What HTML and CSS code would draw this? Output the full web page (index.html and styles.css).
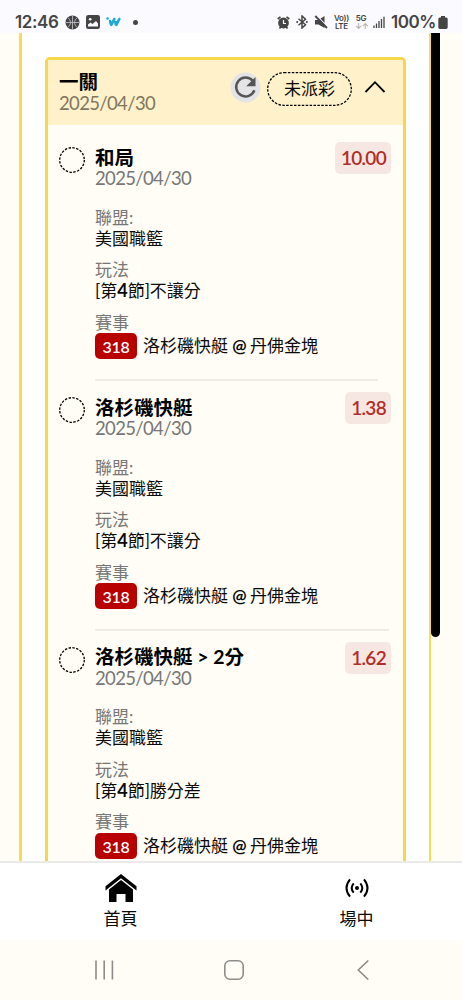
FILE: index.html
```html
<!DOCTYPE html>
<html lang="zh-Hant">
<head>
<meta charset="utf-8">
<meta name="viewport" content="width=device-width, initial-scale=1">
<title>一關</title>
<link rel="stylesheet" href="styles.css">
</head>
<body>
<header class="status">
  <span class="clock">12:46</span>
  <svg class="s-ball" width="15" height="15" viewBox="0 0 15 15"><circle cx="7.5" cy="7.5" r="7" fill="#454545"/><path d="M7.500 .5v14M.5 7.500h14M2.500 2.500c4 3 4 7 0 10M12.500 2.500c-4 3-4 7 0 10" fill="none" stroke="#c8c8ce" stroke-width=".8"/></svg>
  <svg class="s-image" width="14" height="14" viewBox="0 0 14 14"><rect x=".8" y=".8" width="12.400" height="12.400" rx="1.500" fill="#454545" stroke="#454545" stroke-width="1.600"/><path d="M2 11.500V9.500l2.500-2L6.500 9 10 6l2 2.500v3z" fill="#fafaff"/><circle cx="4.200" cy="4.200" r="1.300" fill="#fafaff"/></svg>
  <svg class="s-w" width="15" height="10" viewBox="0 0 15 10"><path d="M1.500 1.500h.1M4 4l.8 3M8.300 2L5.300 7.800M9.500 5L9.700 7M13.300 2L10.300 7.800" fill="none" stroke="#1da9d6" stroke-width="2.600" stroke-linecap="round"/></svg>
  <i class="dot"></i>
  <span class="status-right">
    <svg width="13" height="13" viewBox="0 0 13 13"><circle cx="6.500" cy="7" r="5.400" fill="#454545"/><path d="M.7 3L3.500.8M12.300 3L9.500.8M2.500 12.500l1.500-2M10.500 12.500L9 10.500" stroke="#454545" stroke-width="1.700"/><path d="M6.500 4v3.500h2.500" fill="none" stroke="#fafaff" stroke-width="1.200"/></svg>
    <svg width="12" height="14" viewBox="0 0 12 14"><path d="M2.500 3.800l7 6L6 13V1l3.500 3.200-7 6" fill="none" stroke="#454545" stroke-width="1.500"/><circle cx="1.200" cy="7" r="1" fill="#454545"/><circle cx="10.800" cy="7" r="1" fill="#454545"/></svg>
    <svg width="14" height="14" viewBox="0 0 14 14"><path d="M1 5h3.500L10.500 1v12L4.500 9.500H1z" fill="#454545"/><path d="M2.500 .5l12 12" stroke="#fafaff" stroke-width="1.200"/><path d="M1.300 1L13 13" stroke="#454545" stroke-width="1.800"/></svg>
    <span class="tiny volte">Vo))<br>LTE</span>
    <span class="tiny net">5G<br><small>↓↑</small></span>
    <svg width="12" height="13" viewBox="0 0 12 13"><path d="M1 9.500V12M3.500 7.500V12M6 5V12M8.500 3V12M11 .8V12" stroke="#454545" stroke-width="1.300"/></svg>
    <span class="percent">100%</span>
    <svg class="battery" width="10" height="13" viewBox="0 0 10 13"><path d="M3 0h4v1.500h1.300Q9.700 1.500 9.700 3v8.300Q9.700 13 8.200 13H1.800Q.3 13 .3 11.300V3Q.3 1.500 1.800 1.500H3z" fill="#454545"/></svg>
  </span>
</header>
<main class="viewport">
  <div class="outer">
    <section class="slip">
      <header class="slip-head">
        <div class="slip-name"><h1 class="title">一關</h1><p class="date">2025/04/30</p></div>
        <svg class="refresh" width="31" height="31" viewBox="0 0 31 31"><circle cx="15.500" cy="15.500" r="15" fill="#e4e4e6"/><path d="M22.700 8.800A9.400 9.400 0 1 0 24.400 18.300" fill="none" stroke="#555" stroke-width="2.500"/><path d="M25.500 5v9.300h-9.300z" fill="#555"/></svg>
        <div class="pill"><svg width="85" height="34" viewBox="0 0 85 34"><rect x=".7" y=".7" width="83.600" height="32.600" rx="16.300" fill="none" stroke="#000" stroke-width="1.300" stroke-dasharray="2.500 1.400"/></svg><span class="pill-text">未派彩</span></div>
        <svg class="chevron" width="22" height="14" viewBox="0 0 22 14"><path d="M1.500 12L11 2.200 20.500 12" fill="none" stroke="#000" stroke-width="1.800"/></svg>
      </header>
      <article class="bet">
        <svg class="ring" width="26" height="26" viewBox="0 0 26 26"><circle cx="13" cy="13" r="12.300" fill="none" stroke="#000" stroke-width="1.300" stroke-dasharray="2.450 1.414"/></svg>
        <div class="info">
          <div class="top"><h2 class="title">和局</h2><b class="odds">10.00</b></div>
          <p class="date">2025/04/30</p>
          <dl><dt>聯盟:</dt><dd>美國職籃</dd><dt>玩法</dt><dd>[第<b class="num">4</b>節]不讓分</dd><dt>賽事</dt><dd class="match"><b class="chip">318</b><span>洛杉磯快艇 <i class="at">@</i> 丹佛金塊</span></dd></dl>
          <hr class="rule short">
        </div>
      </article>
      <article class="bet">
        <svg class="ring" width="26" height="26" viewBox="0 0 26 26"><circle cx="13" cy="13" r="12.300" fill="none" stroke="#000" stroke-width="1.300" stroke-dasharray="2.450 1.414"/></svg>
        <div class="info">
          <div class="top"><h2 class="title">洛杉磯快艇</h2><b class="odds">1.38</b></div>
          <p class="date">2025/04/30</p>
          <dl><dt>聯盟:</dt><dd>美國職籃</dd><dt>玩法</dt><dd>[第<b class="num">4</b>節]不讓分</dd><dt>賽事</dt><dd class="match"><b class="chip">318</b><span>洛杉磯快艇 <i class="at">@</i> 丹佛金塊</span></dd></dl>
          <hr class="rule">
        </div>
      </article>
      <article class="bet">
        <svg class="ring" width="26" height="26" viewBox="0 0 26 26"><circle cx="13" cy="13" r="12.300" fill="none" stroke="#000" stroke-width="1.300" stroke-dasharray="2.450 1.414"/></svg>
        <div class="info">
          <div class="top"><h2 class="title">洛杉磯快艇 &gt; 2分</h2><b class="odds">1.62</b></div>
          <p class="date">2025/04/30</p>
          <dl><dt>聯盟:</dt><dd>美國職籃</dd><dt>玩法</dt><dd>[第<b class="num">4</b>節]勝分差</dd><dt>賽事</dt><dd class="match"><b class="chip">318</b><span>洛杉磯快艇 <i class="at">@</i> 丹佛金塊</span></dd></dl>
        </div>
      </article>
    </section>
  </div>
  <i class="scrollbar"></i>
</main>
<nav class="tabs">
  <a class="tab home"><svg width="32" height="28" viewBox="0 0 32 28"><path d="M.5 12.300L16 0l15.500 12.300v4.200L16 4.200.5 16.500z"/><path d="M16 6l12 9.500v12.500h-7.500v-8h-9v8H4V15.500z"/></svg><span>首頁</span></a>
  <a class="tab live"><svg width="26" height="28" viewBox="0 0 26 28"><circle cx="13" cy="14" r="2"/><path d="M9.700 9.300q-4 4.700 0 9.400M16.300 9.300q4 4.700 0 9.400M6 5.300q-7 8.700 0 17.400M20 5.300q7 8.700 0 17.400" fill="none" stroke="#000" stroke-width="2"/></svg><span>場中</span></a>
</nav>
<footer class="system">
  <svg width="20" height="20" viewBox="0 0 20 20"><path d="M2 .5v19M10.200.5v19M18.400.5v19"/></svg>
  <svg class="key-home" width="20" height="20" viewBox="0 0 20 20"><rect x=".8" y=".8" width="18.400" height="18.400" rx="5"/></svg>
  <svg width="12" height="20" viewBox="0 0 12 20"><path d="M11.300.5L1.300 10l10 9.500"/></svg>
</footer>
</body>
</html>
```
FILE: styles.css
```css
* { box-sizing: border-box; }
body {
  margin: 0;
  height: 1000px;
  display: flex;
  flex-direction: column;
  overflow: hidden;
  background: #fffdf5;
  color: #0a0a0a;
  font-family: Lato, "Noto Sans CJK TC", sans-serif;
}
h1, h2, p, dl, dd { margin: 0; }
svg { display: block; flex: none; }

.status {
  height: 33px;
  flex: none;
  display: flex;
  align-items: center;
  padding: 11px 14px 0 15px;
  background: #fafaff;
  color: #454545;
  font-family: Inter, sans-serif;
}
.clock { width: 50px; font-size: 17px; font-weight: 600; line-height: 20px; letter-spacing: -.4px; white-space: nowrap; }
.s-image { margin-left: 6px; }
.s-w { margin-left: 6px; }
.dot { width: 5px; height: 5px; margin-left: 12px; border-radius: 50%; background: #454545; }
.status-right { display: flex; align-items: center; gap: 6px; margin-left: auto; }
.tiny { font-size: 8px; line-height: 8px; font-weight: 600; text-align: center; letter-spacing: -.3px; }
.volte { width: 15px; }
.net { width: 12px; }
.net small { font-size: 8px; color: #aaa; }
.percent { font-size: 17px; font-weight: 600; line-height: 20px; letter-spacing: -.4px; }
.battery { margin-left: -4px; }

.viewport { position: relative; height: 828px; flex: none; overflow: hidden; padding: 0 31px 0 19px; }
.outer {
  height: 1000px;
  padding: 24px 23px 0;
  background: #fff;
  border: solid #f5dc50;
  border-width: 0 2px 0 3px;
}
.slip { border: 3px solid #f5d74b; border-radius: 5px 5px 0 0; background: #fffdf5; height: 980px; }
.slip-head {
  height: 65px;
  display: flex;
  align-items: flex-start;
  padding: 12px 17px 0 11px;
  background: #fff1c9;
}
.slip-name { width: 171px; flex: none; }
.title { font-size: 19.5px; line-height: 21px; font-weight: 700; color: #000; white-space: nowrap; }
.date { font-size: 18.5px; line-height: 21px; letter-spacing: -.65px; color: #777; }
.slip-head .title { line-height: 20px; }
.slip-head .date { margin-top: 1px; color: #81775f; }
.refresh { margin-right: 6px; }
.pill { display: grid; flex: none; margin-right: 12px; }
.pill > * { grid-area: 1 / 1; }
.pill-text { align-self: center; justify-self: center; font-size: 17px; line-height: 22px; }
.chevron { margin-top: 8px; }

.bet { height: 249.8px; display: flex; padding: 17px 12px 0 11px; }
.slip-head + .bet { height: 255px; padding-top: 22px; }
.ring { margin-right: 10px; }
.info { flex: 1; }
.top { display: flex; justify-content: space-between; height: 21px; }
.top .title { line-height: 22px; margin-top: -.5px; }
.odds {
  height: 32px;
  margin: -5px 0 0;
  padding: 0 5px 0 6px;
  border-radius: 5px;
  background: #f7e7e2;
  color: #b12d27;
  font-size: 19px;
  font-weight: 600;
  line-height: 32px;
  letter-spacing: -.7px;
}
dl { margin-top: 17.6px; font-size: 17px; line-height: 21px; }
dt { color: #777; }
dd + dt { margin-top: 10.5px; }
.num { font-size: 18px; }
.match { display: flex; align-items: center; gap: 6px; height: 26px; margin-top: .4px; white-space: nowrap; }
.chip {
  width: 42px;
  height: 26px;
  border-radius: 5px;
  background: #b90000;
  color: #fff;
  font-size: 16px;
  font-weight: 600;
  line-height: 27px;
  letter-spacing: -.3px;
  text-align: center;
}
.at { margin-right: -1px; font-style: normal; font-weight: 700; }
.rule { height: 2px; margin: 20px 2px 0 0; border: 0; background: #efebe5; }
.rule.short { margin-right: 13px; }
.scrollbar { position: absolute; top: 0; left: 431px; width: 9px; height: 604px; border-radius: 0 0 5px 5px; background: #000; }

.tabs { height: 79px; flex: none; display: flex; padding: 0 2px; background: #fff; border-top: 2px solid #eaeaea; }
.tab { width: 50%; padding-top: 11px; display: flex; flex-direction: column; align-items: center; font-size: 17px; line-height: 22px; }
.tab span { margin-top: 6px; }
.home { padding-left: 8px; }
.live { padding-left: 22px; }

.system { flex: 1; display: flex; justify-content: space-between; align-items: center; padding: 0 93px 0 94px; }
.system svg { fill: none; stroke: #8d8d8b; stroke-width: 1.6px; }
.system .key-home { margin-right: 4px; }
```
